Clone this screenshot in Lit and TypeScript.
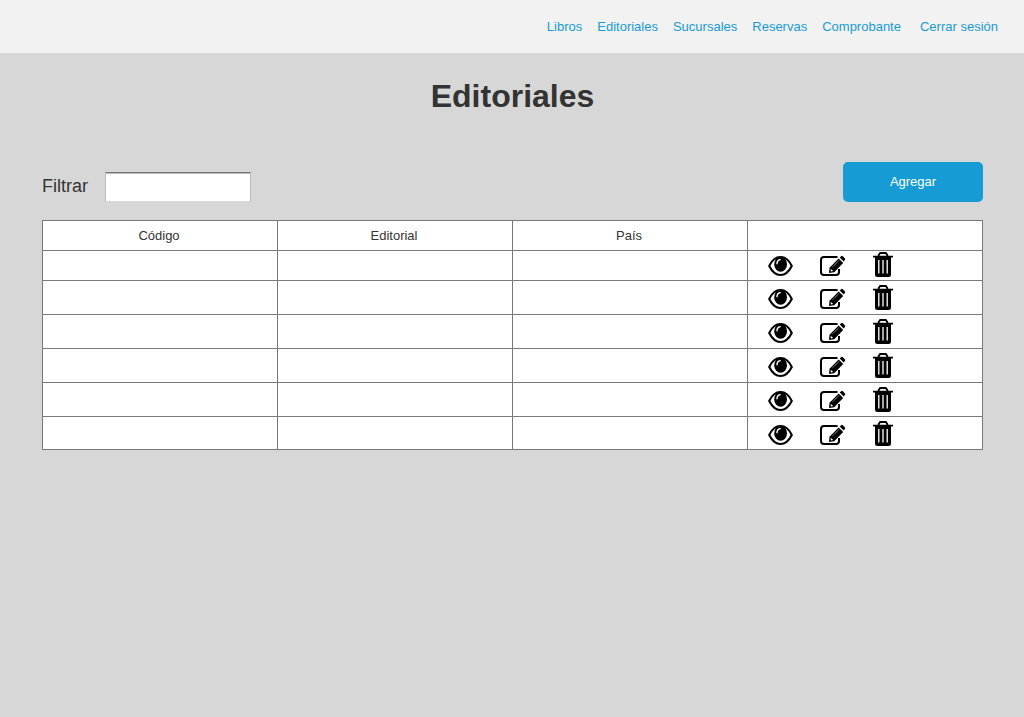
import { LitElement, html, css } from "lit";
import { customElement, state } from "lit/decorators.js";

interface Publisher {
  code: string;
  name: string;
  country: string;
}

const eyeIcon = html`<svg width="25" height="25" viewBox="0 0 25 25" aria-hidden="true">
  <path d="M1.200 14C3.500 9 7.500 5 12.500 5S21.500 9 23.800 14C21.500 18.500 17.500 23 12.500 23S3.500 18.500 1.200 14Z" fill="#fff" stroke="#000" stroke-width="2.100" stroke-linejoin="round"/>
  <ellipse cx="12.600" cy="12.200" rx="6.400" ry="7.600"/>
  <path d="M9 11.800C9 9.400 10.300 8 12.200 7.600" fill="none" stroke="#fff" stroke-width="1.400" stroke-linecap="round"/>
</svg>`;

const editIcon = html`<svg width="26" height="25" viewBox="0 0 26 25" aria-hidden="true">
  <path d="M17.500 5H4Q1 5 1 8V20Q1 23 4 23H16Q19 23 19 20V17" fill="none" stroke="#000" stroke-width="2"/>
  <path d="M9 21L9.500 15.700L18.700 6.600L23.200 11.100L14.200 20.200Z" fill="#000"/>
  <path d="M19.700 5.600L21.400 4Q22 3.500 22.600 4.100L25 6.500Q25.600 7.100 25 7.700L23.700 9.600Z" fill="#000"/>
  <path d="M12.500 14.800L19.200 8.400" stroke="#fff" stroke-width="0.700" stroke-dasharray="1.200 0.500"/>
  <path d="M10.600 16.700L13.200 19.100L10.900 19.600Z" fill="#fff"/>
</svg>`;

const trashIcon = html`<svg width="20" height="25" viewBox="0 0 20 25" aria-hidden="true">
  <path d="M5.700 4.500V3L7.200 1H12.800L14.300 3V4.500" fill="none" stroke="#000" stroke-width="1.900"/>
  <path d="M0 3.800H20V5.600H18V22.500Q18 25 15.500 25H4.500Q2 25 2 22.500V5.600H0Z"/>
  <path d="M5.800 8V21.500M10 8V21.500M14.200 8V21.500" stroke="#fff" stroke-width="1.300"/>
</svg>`;

@customElement("app-root")
export class AppRoot extends LitElement {
  @state() private filter = "";

  private publishers: Publisher[] = Array.from({ length: 6 }, () => ({
    code: "",
    name: "",
    country: "",
  }));

  static styles = css`
    :host {
      display: block;
      min-height: 100vh;
      background: #d7d7d7;
      color: #333;
      font: 13px/15px "Liberation Sans", Arial, sans-serif;
    }
    .nav {
      display: flex;
      justify-content: flex-end;
      gap: 15px;
      padding: 19px 26px;
      background: #f2f2f2;
    }
    .nav-link {
      color: #169bd5;
      text-decoration: none;
    }
    .session {
      margin-left: 4px;
    }
    .page {
      padding: 25px 41px 24px 42px;
    }
    .title {
      margin: 0 0 47px;
      font-size: 32px;
      line-height: 37px;
      text-align: center;
    }
    .toolbar {
      display: flex;
      justify-content: space-between;
      align-items: flex-end;
      margin-bottom: 18px;
    }
    .filter {
      display: flex;
      align-items: center;
      gap: 17px;
      font-size: 18px;
      line-height: 20px;
    }
    .filter-label {
      padding-bottom: 2px;
    }
    .filter-input {
      box-sizing: border-box;
      width: 146px;
      height: 30px;
      padding: 2px 4px;
      border: 1px solid #bbb;
      border-top-color: #777;
      border-bottom-color: #d7d7d7;
      border-radius: 0;
      background: #fff;
      box-shadow: inset 0 1px #bbb;
      color: inherit;
      font: inherit;
    }
    .add {
      width: 140px;
      height: 40px;
      padding: 0 0 2px;
      border: 0;
      border-radius: 5px;
      background: #169bd5;
      color: #fff;
      font: inherit;
    }
    .table {
      width: 100%;
      table-layout: fixed;
      border-collapse: collapse;
      background: #fff;
    }
    .cell {
      box-sizing: border-box;
      height: 34px;
      padding: 0;
      border: 1px solid #797979;
      font-weight: normal;
      text-align: center;
      vertical-align: middle;
    }
    .head .cell,
    .row:first-child .cell {
      height: 30px;
    }
    .head .cell {
      padding-right: 2px;
    }
    .row:first-child .cell {
      padding-bottom: 2px;
    }
    .row:last-child .cell {
      height: 33px;
    }
    .actions {
      display: flex;
      align-items: center;
      padding-left: 20px;
    }
    .icon {
      display: flex;
      padding: 0;
      border: 0;
      background: none;
      color: #000;
    }
    .edit {
      margin: 0 27px;
    }
  `;

  private onFilter(e: Event) {
    this.filter = (e.target as HTMLInputElement).value;
  }

  private get visible() {
    const term = this.filter.toLowerCase();
    return this.publishers.filter((p) =>
      `${p.code} ${p.name} ${p.country}`.toLowerCase().includes(term)
    );
  }

  render() {
    return html`
      <nav class="nav">
        <a class="nav-link" href="#libros">Libros</a>
        <a class="nav-link" href="#editoriales">Editoriales</a>
        <a class="nav-link" href="#sucursales">Sucursales</a>
        <a class="nav-link" href="#reservas">Reservas</a>
        <a class="nav-link" href="#comprobante">Comprobante</a>
        <a class="nav-link session" href="#salir">Cerrar sesión</a>
      </nav>
      <main class="page">
        <h1 class="title">Editoriales</h1>
        <div class="toolbar">
          <div class="filter">
            <label class="filter-label" for="filter">Filtrar</label>
            <input id="filter" class="filter-input" type="text" .value=${this.filter} @input=${this.onFilter} />
          </div>
          <button class="add" type="button">Agregar</button>
        </div>
        <table class="table">
          <thead class="head">
            <tr>
              <th class="cell" scope="col">Código</th>
              <th class="cell" scope="col">Editorial</th>
              <th class="cell" scope="col">País</th>
              <td class="cell"></td>
            </tr>
          </thead>
          <tbody>
            ${this.visible.map(
              (p) => html`<tr class="row">
                <td class="cell">${p.code}</td>
                <td class="cell">${p.name}</td>
                <td class="cell">${p.country}</td>
                <td class="cell">
                  <div class="actions">
                    <button class="icon" type="button" aria-label="Ver">${eyeIcon}</button>
                    <button class="icon edit" type="button" aria-label="Editar">${editIcon}</button>
                    <button class="icon" type="button" aria-label="Eliminar">${trashIcon}</button>
                  </div>
                </td>
              </tr>`
            )}
          </tbody>
        </table>
      </main>
    `;
  }
}
